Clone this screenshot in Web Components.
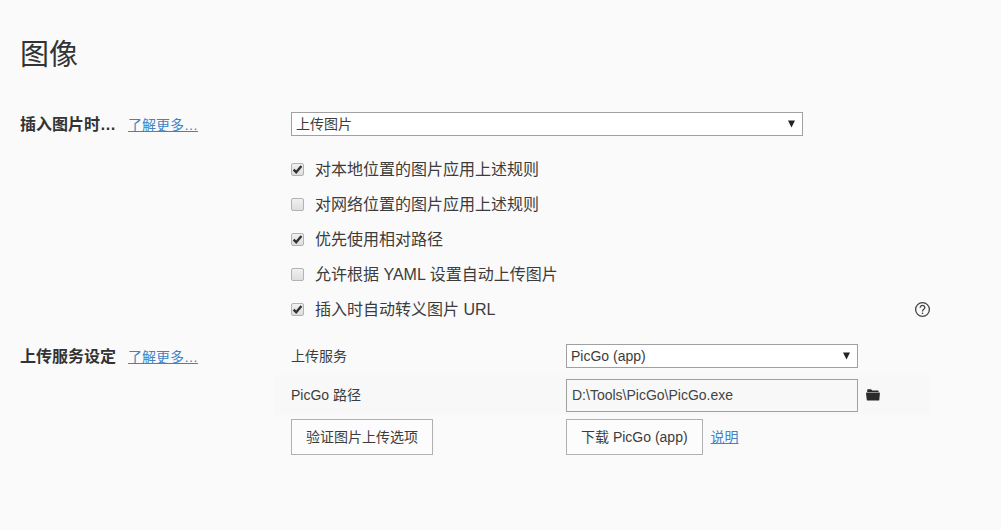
<!DOCTYPE html>
<html lang="zh-CN">
<head>
<meta charset="utf-8">
<meta name="viewport" content="width=device-width, initial-scale=1">
<title>图像</title>
<style>
body {
    margin: 0;
    background: #fafafa;
    color: #3c3c3c;
    font-family: "Liberation Sans", "Noto Sans CJK SC", sans-serif;
    font-size: 14px;
    line-height: 20px;
}
</style>
</head>
<body>
<prefs-page>
  <span slot="title">图像</span>

  <prefs-section>
    <label slot="name" for="insertAction">插入图片时…</label>
    <text-link slot="more" href="#insert">了解更多…</text-link>
    <check-list>
      <drop-down slot="action">
        <select id="insertAction">
          <option>上传图片</option>
        </select>
      </drop-down>
      <check-row checked>对本地位置的图片应用上述规则</check-row>
      <check-row>对网络位置的图片应用上述规则</check-row>
      <check-row checked>优先使用相对路径</check-row>
      <check-row>允许根据 YAML 设置自动上传图片</check-row>
      <check-row checked help>插入时自动转义图片 URL</check-row>
    </check-list>
  </prefs-section>

  <prefs-section>
    <span slot="name">上传服务设定</span>
    <text-link slot="more" href="#upload">了解更多…</text-link>
    <field-row>
      <label slot="label" for="service">上传服务</label>
      <drop-down>
        <select id="service">
          <option>PicGo (app)</option>
        </select>
      </drop-down>
    </field-row>
    <field-row shaded>
      <label slot="label" for="path">PicGo 路径</label>
      <input id="path" type="text" value="D:\Tools\PicGo\PicGo.exe" spellcheck="false">
      <folder-button></folder-button>
    </field-row>
    <field-row>
      <push-button slot="label">验证图片上传选项</push-button>
      <push-button>下载 PicGo (app)</push-button>
      <text-link href="#help">说明</text-link>
    </field-row>
  </prefs-section>
</prefs-page>

<script>
// attach an open root and fill it with the markup
function render(el, html) {
  el.attachShadow({ mode: 'open' }).innerHTML = html;
}

class PrefsPage extends HTMLElement {
  constructor() {
    super();
    render(this, `
      <style>
        :host {
          display: block;
          padding: 35px 70px 20px 20px;
        }
        h1 {
          margin: 0 0 37px;
          color: #333;
          font-size: 29px;
          font-weight: 400;
          line-height: 40px;
        }
      </style>
      <h1><slot name="title"></slot></h1>
      <slot></slot>
    `);
  }
}

class PrefsSection extends HTMLElement {
  constructor() {
    super();
    render(this, `
      <style>
        :host {
          display: grid;
          grid-template-columns: 255px minmax(0, 1fr);
          margin-bottom: 10px;
        }
        header {
          display: flex;
          align-items: center;
          gap: 12px;
          height: 26px;
        }
        h2 {
          margin: 0;
          color: #333;
          font-size: 16px;
          font-weight: bold;
          line-height: 24px;
        }
        :host(:last-of-type) header {
          height: 40px;
        }
      </style>
      <header>
        <h2><slot name="name"></slot></h2>
        <slot name="more"></slot>
      </header>
      <div><slot></slot></div>
    `);
  }
}

class TextLink extends HTMLElement {
  constructor() {
    super();
    render(this, `
      <style>
        :host { display: inline-block; }
        a {
          color: #4183c4;
          text-decoration: underline;
        }
      </style>
      <a><slot></slot></a>
    `);
    this.shadowRoot.querySelector('a').href = this.getAttribute('href') || '#';
  }
}

class DropDown extends HTMLElement {
  constructor() {
    super();
    render(this, `
      <style>
        :host {
          display: grid;
          align-items: center;
          width: 80%;
        }
        ::slotted(select) {
          grid-area: 1 / 1;
          appearance: none;
          box-sizing: border-box;
          width: 100%;
          height: 24px;
          margin: 0;
          padding: 0 24px 0 4px;
          border: 1px solid #a0a0a0;
          border-radius: 0;
          background: #fff;
          color: #3c3c3c;
          font: inherit;
        }
        svg {
          grid-area: 1 / 1;
          justify-self: end;
          margin-right: 7px;
          pointer-events: none;
          z-index: 1;
        }
      </style>
      <slot></slot>
      <svg width="9" height="8" viewBox="0 0 9 8"><path d="M1 0.5h7L4.5 7.5z" fill="#222"/></svg>
    `);
  }
}

// drop-down on top, tick boxes under it
class CheckList extends HTMLElement {
  constructor() {
    super();
    render(this, `
      <style>
        :host {
          display: block;
          padding-left: 16px;
        }
        .rows {
          padding-top: 16px;
        }
      </style>
      <slot name="action"></slot>
      <div class="rows"><slot></slot></div>
    `);
  }
}

class CheckRow extends HTMLElement {
  constructor() {
    super();
    render(this, `
      <style>
        :host {
          display: flex;
          align-items: center;
          justify-content: space-between;
          height: 35px;
        }
        label {
          display: grid;
          grid-template-columns: 13px auto;
          column-gap: 11px;
          align-items: center;
          font-size: 16px;
          line-height: 24px;
        }
        input {
          grid-area: 1 / 1;
          appearance: none;
          width: 13px;
          height: 13px;
          margin: 0;
          box-sizing: border-box;
          border: 1px solid #b2b2b2;
          border-radius: 2px;
          background: linear-gradient(#f0f0f0, #dedede);
        }
        .tick {
          grid-area: 1 / 1;
          visibility: hidden;
          pointer-events: none;
          z-index: 1;
        }
        input:checked + .tick { visibility: visible; }
        button {
          display: flex;
          padding: 0;
          border: 0;
          background: none;
        }
      </style>
      <label>
        <input type="checkbox">
        <svg class="tick" width="13" height="13" viewBox="0 0 13 13"><path d="M2.6 6.6L5.2 9.2L10.4 2.9" fill="none" stroke="#333" stroke-width="2.4"/></svg>
        <span><slot></slot></span>
      </label>
    `);
    this.shadowRoot.querySelector('input').checked = this.hasAttribute('checked');

    if (this.hasAttribute('help')) {
      const button = document.createElement('button');
      button.setAttribute('aria-label', '帮助');
      button.innerHTML = `
        <svg width="17" height="17" viewBox="0 0 17 17" fill="none" stroke="#444">
          <circle cx="8.5" cy="8.5" r="6.9" stroke-width="1.3"/>
          <path d="M6.2 6.8C6.2 3.6 10.9 3.7 10.8 6.7C10.7 8.4 8.5 8.4 8.5 10.4" stroke-width="1.3"/>
          <path d="M8.5 11.6v1.4" stroke-width="1.4"/>
        </svg>`;
      this.shadowRoot.appendChild(button);
    }
  }
}

class FieldRow extends HTMLElement {
  constructor() {
    super();
    render(this, `
      <style>
        :host {
          display: grid;
          grid-template-columns: 275px minmax(0, 1fr);
          align-items: center;
          min-height: 38px;
          padding-left: 16px;
        }
        :host([shaded]) {
          min-height: 40px;
          margin-bottom: 3px;
          background: #f8f8f8;
        }
        .control {
          display: flex;
          align-items: center;
          gap: 8px;
        }
        ::slotted(input) {
          box-sizing: border-box;
          width: 80%;
          height: 33px;
          margin: 0;
          padding: 0 5px;
          border: 1px solid #a0a0a0;
          background: #f8f8f8;
          color: #444;
          font: inherit;
        }
      </style>
      <div><slot name="label"></slot></div>
      <div class="control"><slot></slot></div>
    `);
  }
}

class PushButton extends HTMLElement {
  constructor() {
    super();
    render(this, `
      <style>
        :host { display: flex; }
        button {
          height: 36px;
          padding: 0 14px;
          border: 1px solid #b0b0b0;
          background: #fcfcfc;
          color: #3c3c3c;
          font: inherit;
        }
      </style>
      <button type="button"><slot></slot></button>
    `);
  }
}

class FolderButton extends HTMLElement {
  constructor() {
    super();
    render(this, `
      <style>
        :host { display: flex; }
        button {
          display: flex;
          padding: 0;
          border: 0;
          background: none;
        }
      </style>
      <button type="button" aria-label="浏览">
        <svg width="14" height="12" viewBox="0 0 14 12" fill="#2b2b2b">
          <path d="M1.2 3V1.2Q1.2 0.3 2 0.3H5L6.2 1.5H11.8Q12.6 1.5 12.6 2.3V3z"/>
          <path d="M0.7 3.6H13.3Q14 3.6 13.9 4.3L13.3 11Q13.2 11.6 12.6 11.6H1.5Q0.9 11.6 0.8 11L0 4.3Q0 3.6 0.7 3.6z"/>
        </svg>
      </button>
    `);
  }
}

customElements.define('prefs-page', PrefsPage);
customElements.define('prefs-section', PrefsSection);
customElements.define('text-link', TextLink);
customElements.define('drop-down', DropDown);
customElements.define('check-list', CheckList);
customElements.define('check-row', CheckRow);
customElements.define('field-row', FieldRow);
customElements.define('push-button', PushButton);
customElements.define('folder-button', FolderButton);
</script>
</body>
</html>
